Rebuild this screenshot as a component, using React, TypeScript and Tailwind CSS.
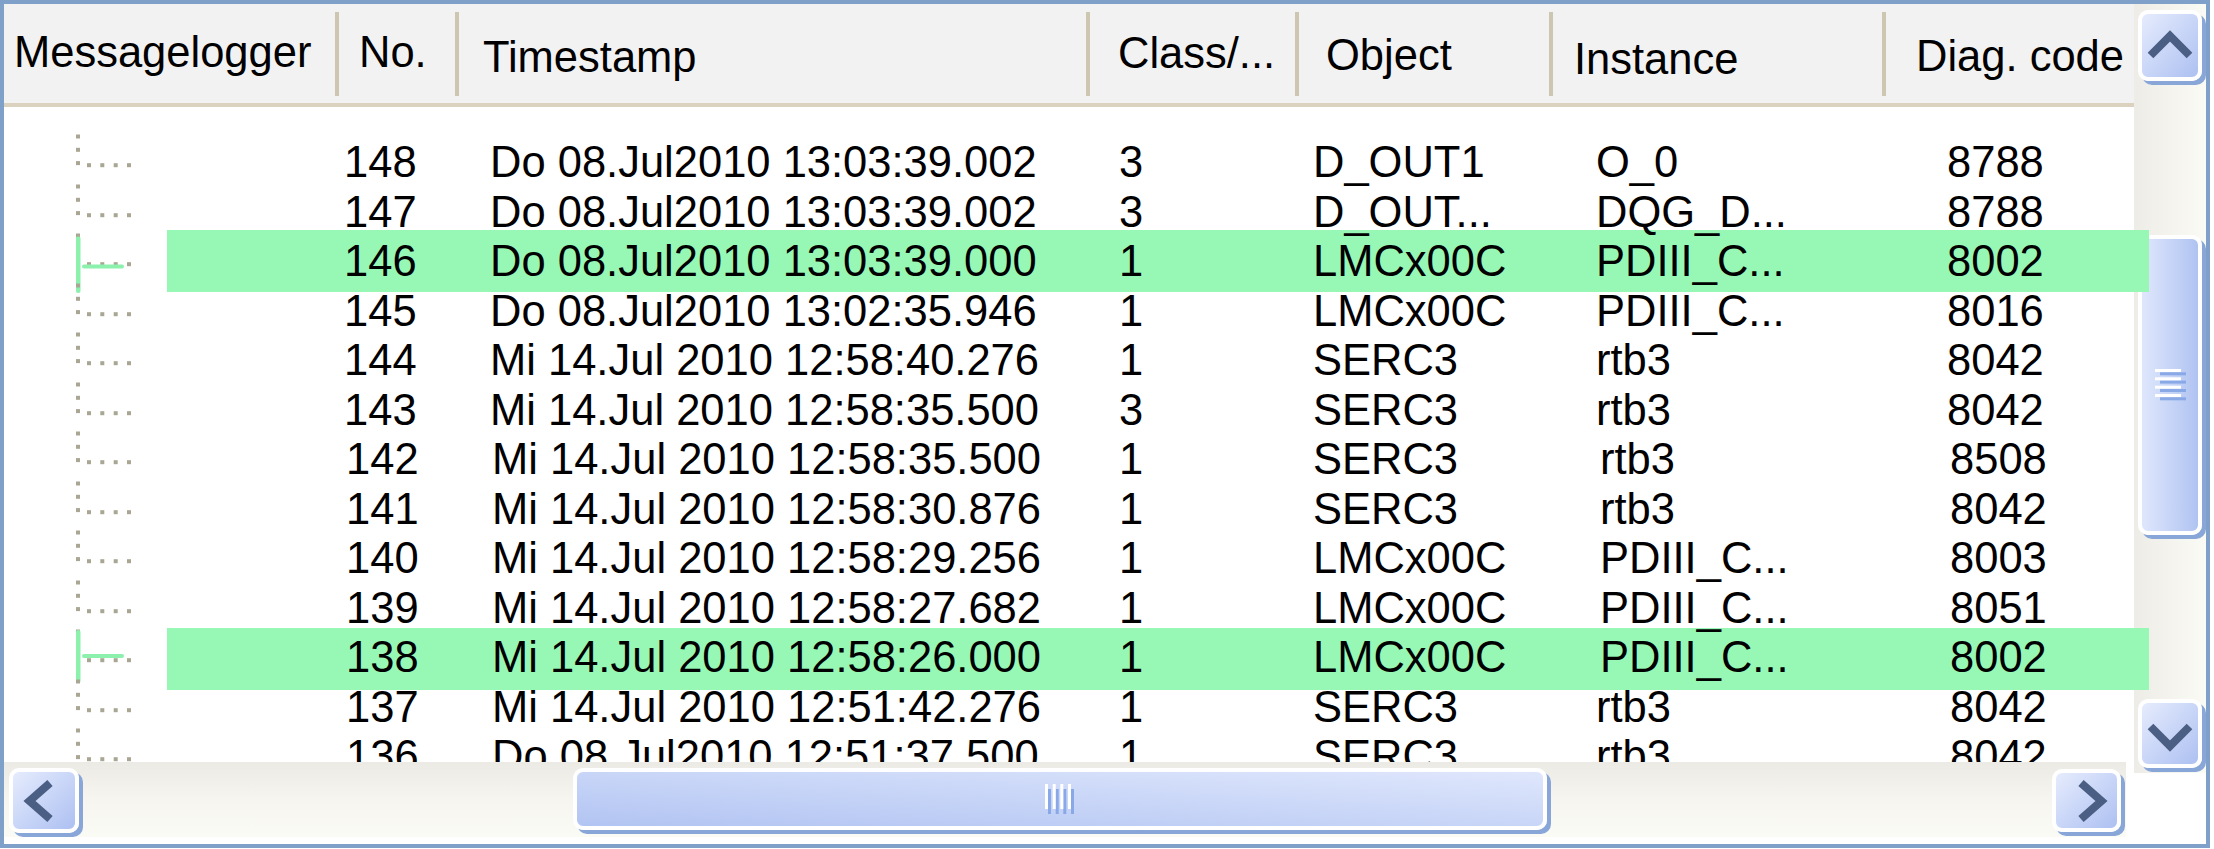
import React from "react";

type Row = {
  no: string;
  ts: string;
  cls: string;
  obj: string;
  inst: string;
  diag: string;
  hl?: "a" | "b";
  s?: boolean;
  si?: boolean;
  sd?: boolean;
};

const rows: Row[] = [
  { no: "148", ts: "Do 08.Jul2010 13:03:39.002", cls: "3", obj: "D_OUT1", inst: "O_0", diag: "8788" },
  { no: "147", ts: "Do 08.Jul2010 13:03:39.002", cls: "3", obj: "D_OUT...", inst: "DQG_D...", diag: "8788" },
  { no: "146", ts: "Do 08.Jul2010 13:03:39.000", cls: "1", obj: "LMCx00C", inst: "PDIII_C...", diag: "8002", hl: "a" },
  { no: "145", ts: "Do 08.Jul2010 13:02:35.946", cls: "1", obj: "LMCx00C", inst: "PDIII_C...", diag: "8016" },
  { no: "144", ts: "Mi 14.Jul 2010 12:58:40.276", cls: "1", obj: "SERC3", inst: "rtb3", diag: "8042" },
  { no: "143", ts: "Mi 14.Jul 2010 12:58:35.500", cls: "3", obj: "SERC3", inst: "rtb3", diag: "8042" },
  { no: "142", ts: "Mi 14.Jul 2010 12:58:35.500", cls: "1", obj: "SERC3", inst: "rtb3", diag: "8508", s: true, si: true, sd: true },
  { no: "141", ts: "Mi 14.Jul 2010 12:58:30.876", cls: "1", obj: "SERC3", inst: "rtb3", diag: "8042", s: true, si: true, sd: true },
  { no: "140", ts: "Mi 14.Jul 2010 12:58:29.256", cls: "1", obj: "LMCx00C", inst: "PDIII_C...", diag: "8003", s: true, si: true, sd: true },
  { no: "139", ts: "Mi 14.Jul 2010 12:58:27.682", cls: "1", obj: "LMCx00C", inst: "PDIII_C...", diag: "8051", s: true, si: true, sd: true },
  { no: "138", ts: "Mi 14.Jul 2010 12:58:26.000", cls: "1", obj: "LMCx00C", inst: "PDIII_C...", diag: "8002", hl: "b", s: true, si: true, sd: true },
  { no: "137", ts: "Mi 14.Jul 2010 12:51:42.276", cls: "1", obj: "SERC3", inst: "rtb3", diag: "8042", s: true, sd: true },
  { no: "136", ts: "Do 08.Jul2010 12:51:37.500", cls: "1", obj: "SERC3", inst: "rtb3", diag: "8042", s: true, sd: true },
];

function Tree({ hl }: { hl?: "a" | "b" }) {
  const gray = "#aaa694";
  const green = "#8cf1ad";
  return (
    <svg width="140" height="50" className="block overflow-visible">
      {[-3.5, 9.8, 23.1].map((y) => (
        <rect key={"v" + y} x="72" y={y} width="4" height="4" fill={gray} />
      ))}
      {[83, 96.3, 109.7, 123].map((x) => (
        <rect key={"h" + x} x={x} y="25.2" width="4" height="4" fill={gray} />
      ))}
      {hl === "a" && (
        <>
          <rect x="72" y="-0.5" width="4.5" height="56.5" rx="2" fill={green} />
          <rect x="78" y="27.5" width="42" height="4" rx="2" fill={green} />
        </>
      )}
      {hl === "b" && (
        <>
          <rect x="72" y="-3" width="4.5" height="53" rx="2" fill={green} />
          <rect x="78" y="21" width="42" height="4" rx="2" fill={green} />
        </>
      )}
    </svg>
  );
}

const STROKE = "#4b5e84";

function ChevUp() {
  return (
    <svg width="44" height="26" viewBox="0 0 44 26" className="block overflow-visible">
      <polyline points="2.5,22.5 22,3 41.5,22.5" fill="none" stroke={STROKE} strokeWidth="8" strokeLinejoin="miter" />
    </svg>
  );
}
function ChevDown() {
  return (
    <svg width="44" height="26" viewBox="0 0 44 26" className="block overflow-visible">
      <polyline points="2.5,3.5 22,23 41.5,3.5" fill="none" stroke={STROKE} strokeWidth="8" strokeLinejoin="miter" />
    </svg>
  );
}
function ChevLeft() {
  return (
    <svg width="24" height="40" viewBox="0 0 24 40" className="block overflow-visible">
      <polyline points="22,2 1.5,20 22,38" fill="none" stroke={STROKE} strokeWidth="8" strokeLinejoin="miter" />
    </svg>
  );
}
function ChevRight() {
  return (
    <svg width="24" height="40" viewBox="0 0 24 40" className="block overflow-visible">
      <polyline points="2,2 22.5,20 2,38" fill="none" stroke={STROKE} strokeWidth="8" strokeLinejoin="miter" />
    </svg>
  );
}

function HGrip() {
  const xs = [0, 7.7, 15.3, 23];
  return (
    <svg width="30" height="31" className="block">
      {xs.map((x) => (
        <rect key={"b" + x} x={x + 3} y="5" width="3" height="25" fill="#89a9e6" />
      ))}
      {xs.map((x) => (
        <rect key={"w" + x} x={x} y="0" width="3" height="25" fill="#ffffff" />
      ))}
    </svg>
  );
}

function VGrip() {
  const ys = [0, 8.3, 16.7, 25];
  return (
    <svg width="31" height="32" className="block">
      {ys.map((y) => (
        <rect key={"b" + y} x="5" y={y + 3.3} width="26" height="3" fill="#89a9e6" />
      ))}
      {ys.map((y) => (
        <rect key={"w" + y} x="0" y={y} width="26" height="3" fill="#ffffff" />
      ))}
    </svg>
  );
}

function Sep() {
  return <div className="w-[4px] h-[84px] mt-[8px] bg-[#cdc6b1] shrink-0" />;
}

function Header() {
  return (
    <div className="h-[103px] shrink-0 bg-[#f2f2f2] border-b-4 border-[#dad2bf] flex text-[43.5px] leading-[49.5px] whitespace-nowrap">
      <div className="w-[331px] shrink-0 pl-[10px] pt-[24px]">Messagelogger</div>
      <Sep />
      <div className="w-[116px] shrink-0 pl-[20px] pt-[24px]">No.</div>
      <Sep />
      <div className="w-[627px] shrink-0 pl-[24px] pt-[29px]">Timestamp</div>
      <Sep />
      <div className="w-[205px] shrink-0 pl-[28px] pt-[25px]">Class/...</div>
      <Sep />
      <div className="w-[250px] shrink-0 pl-[27px] pt-[27px]">Object</div>
      <Sep />
      <div className="w-[329px] shrink-0 pl-[21px] pt-[31px]">Instance</div>
      <Sep />
      <div className="flex-1 pl-[30px] pt-[28px]">Diag. code</div>
    </div>
  );
}

function Body() {
  return (
    <div className="h-[655px] shrink-0 overflow-y-clip overflow-x-visible pt-[31px] bg-white">
      {rows.map((r) => (
        <div key={r.no} className="relative h-[49.5px]">
          {r.hl === "a" && (
            <div className="absolute left-[163px] right-[-15px] top-[-7px] h-[62px] bg-[#97f8b6] z-10" />
          )}
          {r.hl === "b" && (
            <div className="absolute left-[163px] right-[-15px] top-[-5px] h-[62px] bg-[#97f8b6] z-10" />
          )}
          <div className="relative z-20 h-full grid grid-cols-[340px_146px_629px_194px_283px_351px_1fr] text-[43.5px] leading-[49.5px] whitespace-nowrap">
            <div>
              <Tree hl={r.hl} />
            </div>
            <div className={r.s ? "pl-[2px]" : ""}>{r.no}</div>
            <div className={r.s ? "pl-[2px]" : ""}>{r.ts}</div>
            <div>{r.cls}</div>
            <div>{r.obj}</div>
            <div className={r.si ? "pl-[4px]" : ""}>{r.inst}</div>
            <div className={r.sd ? "pl-[3px]" : ""}>{r.diag}</div>
          </div>
        </div>
      ))}
    </div>
  );
}

function HScroll() {
  return (
    <div className="w-[2122px] h-[75px] shrink-0 flex items-start pl-[5px] bg-linear-to-b from-[#ebeae4] via-[#f6f5f0] to-[#fbfbf6]">
      <div className="w-[70px] h-[65px] mt-[6px] shrink-0 rounded-[10px] border-4 border-white shadow-[4px_4px_0_#88a6d8] bg-linear-to-br from-[#e6ecfd] to-[#adc0f1] flex items-center justify-center">
        <div className="mr-[9px]">
          <ChevLeft />
        </div>
      </div>
      <div className="ml-[494px] mt-[6px] w-[974px] h-[62px] shrink-0 rounded-[10px] border-4 border-white shadow-[4px_4px_0_#88a6d8] bg-linear-to-tr from-[#b2c4f2] to-[#dfe7fc] flex items-center justify-center">
        <HGrip />
      </div>
      <div className="ml-[505px] mt-[7px] w-[69px] h-[63px] shrink-0 rounded-[10px] border-4 border-white shadow-[4px_4px_0_#88a6d8] bg-linear-to-br from-[#e6ecfd] to-[#adc0f1] flex items-center justify-center">
        <div className="ml-[9px]">
          <ChevRight />
        </div>
      </div>
    </div>
  );
}

function VScroll() {
  return (
    <div className="h-[769px] shrink-0 flex flex-col items-start pl-[4px] pt-[6px] bg-linear-to-r from-[#edece6] to-[#fbfbf6]">
      <div className="w-[64px] h-[71px] shrink-0 rounded-[10px] border-4 border-white shadow-[4px_4px_0_#88a6d8] bg-linear-to-br from-[#e6ecfd] to-[#adc0f1] flex items-center justify-center">
        <ChevUp />
      </div>
      <div className="mt-[154px] w-[64px] h-[300px] shrink-0 rounded-[10px] border-4 border-white shadow-[4px_4px_0_#88a6d8] bg-linear-to-r from-[#dfe7fc] to-[#b0c3f1] flex items-center justify-center">
        <VGrip />
      </div>
      <div className="mt-[164px] w-[64px] h-[69px] shrink-0 rounded-[10px] border-4 border-white shadow-[4px_4px_0_#88a6d8] bg-linear-to-br from-[#e6ecfd] to-[#adc0f1] flex items-center justify-center pt-[4px]">
        <ChevDown />
      </div>
    </div>
  );
}

export default function App() {
  return (
    <div className="w-[2214px] h-[849px] bg-white font-['Liberation_Sans',Arial,sans-serif] text-black overflow-hidden">
      <div className="w-[2210px] h-[848px] border-4 border-[#7fa0c8] flex bg-white">
        <div className="w-[2130px] shrink-0 flex flex-col">
          <Header />
          <Body />
          <HScroll />
        </div>
        <div className="w-[72px] shrink-0 flex flex-col">
          <VScroll />
        </div>
      </div>
    </div>
  );
}
